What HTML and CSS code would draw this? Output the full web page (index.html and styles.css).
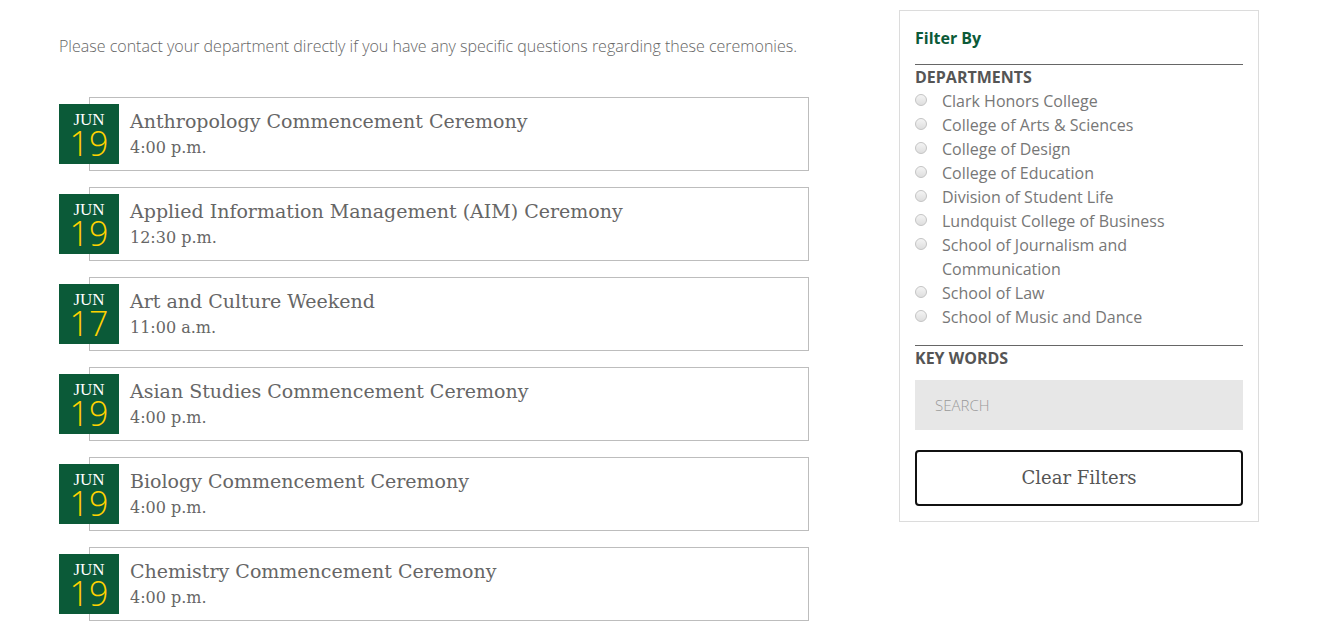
FILE: index.html
```html
<!DOCTYPE html>
<html>
<head>
<meta charset="utf-8">
<link rel="stylesheet" href="styles.css">
</head>
<body>
<div class="page">
  <main class="main">
    <p class="intro">Please contact your department directly if you have any specific questions regarding these ceremonies.</p>
    <div class="events">
      <div class="card">
        <div class="date"><span class="mon">JUN</span><span class="day">19</span></div>
        <div class="info"><div class="title">Anthropology Commencement Ceremony</div><div class="time">4:00 p.m.</div></div>
      </div>
      <div class="card">
        <div class="date"><span class="mon">JUN</span><span class="day">19</span></div>
        <div class="info"><div class="title">Applied Information Management (AIM) Ceremony</div><div class="time">12:30 p.m.</div></div>
      </div>
      <div class="card">
        <div class="date"><span class="mon">JUN</span><span class="day">17</span></div>
        <div class="info"><div class="title">Art and Culture Weekend</div><div class="time">11:00 a.m.</div></div>
      </div>
      <div class="card">
        <div class="date"><span class="mon">JUN</span><span class="day">19</span></div>
        <div class="info"><div class="title">Asian Studies Commencement Ceremony</div><div class="time">4:00 p.m.</div></div>
      </div>
      <div class="card">
        <div class="date"><span class="mon">JUN</span><span class="day">19</span></div>
        <div class="info"><div class="title">Biology Commencement Ceremony</div><div class="time">4:00 p.m.</div></div>
      </div>
      <div class="card">
        <div class="date"><span class="mon">JUN</span><span class="day">19</span></div>
        <div class="info"><div class="title">Chemistry Commencement Ceremony</div><div class="time">4:00 p.m.</div></div>
      </div>
    </div>
  </main>
  <aside class="filter">
    <h2 class="filter-title">Filter By</h2>
    <h3 class="section-title">DEPARTMENTS</h3>
    <ul class="options">
      <li><span class="radio"></span><span>Clark Honors College</span></li>
      <li><span class="radio"></span><span>College of Arts &amp; Sciences</span></li>
      <li><span class="radio"></span><span>College of Design</span></li>
      <li><span class="radio"></span><span>College of Education</span></li>
      <li><span class="radio"></span><span>Division of Student Life</span></li>
      <li><span class="radio"></span><span>Lundquist College of Business</span></li>
      <li><span class="radio"></span><span>School of Journalism and Communication</span></li>
      <li><span class="radio"></span><span>School of Law</span></li>
      <li><span class="radio"></span><span>School of Music and Dance</span></li>
    </ul>
    <h3 class="section-title">KEY WORDS</h3>
    <div class="search">SEARCH</div>
    <div class="clear">Clear Filters</div>
  </aside>
</div>
</body>
</html>
```
FILE: styles.css
```css
* { box-sizing: border-box; }
html, body { margin: 0; padding: 0; background: #fff; }
body { font-family: "Open Sans", sans-serif; color: #666; }
.page { display: flex; align-items: flex-start; padding: 10px 0 0 59px; }
.main { width: 750px; }
.intro { margin: 24px 0 0; font-weight: 300; font-size: 16px; line-height: 24px; color: #666; white-space: nowrap; }
.events { margin-top: 39px; display: flex; flex-direction: column; gap: 16px; }
.card { margin-left: 30px; width: 720px; height: 74px; border: 1px solid #bdbdbd; display: flex; align-items: flex-start; }
.date { flex: none; width: 60px; height: 60px; margin: 6px 0 0 -31px; background: #0b5a38; display: flex; flex-direction: column; align-items: center; }
.mon { display: block; font-family: "Liberation Serif", serif; font-size: 17px; line-height: 18px; color: #fff; margin-top: 7px; }
.day { display: block; font-family: "Open Sans", sans-serif; font-weight: 300; font-size: 34px; line-height: 28px; color: #ffd200; }
.info { padding: 10px 0 0 11px; }
.title { font-family: "DejaVu Serif", serif; font-size: 19px; line-height: 26px; color: #666; white-space: nowrap; }
.time { font-family: "DejaVu Serif", serif; font-size: 16px; line-height: 24px; color: #666; margin-top: 2px; }
.filter { margin-left: 90px; width: 360px; border: 1px solid #dcdcdc; padding: 15px; }
.filter-title { margin: 0; font-size: 16px; font-weight: 700; color: #0b5a38; line-height: 24px; padding-bottom: 14px; }
.section-title { margin: 0; border-top: 1px solid #666; font-size: 16px; font-weight: 700; color: #555; line-height: 24px; }
.options { list-style: none; margin: 0 0 16px; padding: 0; }
.options li { display: flex; align-items: flex-start; font-size: 16px; line-height: 24px; color: #777; }
.radio { flex: none; width: 12px; height: 12px; border-radius: 50%; border: 1px solid #c4c4c4; background: linear-gradient(#f4f4f4, #dedede); margin: 5px 15px 0 0; }
.search { margin-top: 10px; height: 50px; background: #e7e7e7; padding-left: 20px; font-weight: 300; font-size: 15px; line-height: 50px; color: #999; }
.clear { margin-top: 20px; height: 56px; border: 2px solid #111; border-radius: 4px; text-align: center; font-family: "DejaVu Serif", serif; font-size: 18px; line-height: 52px; color: #555; }
```
